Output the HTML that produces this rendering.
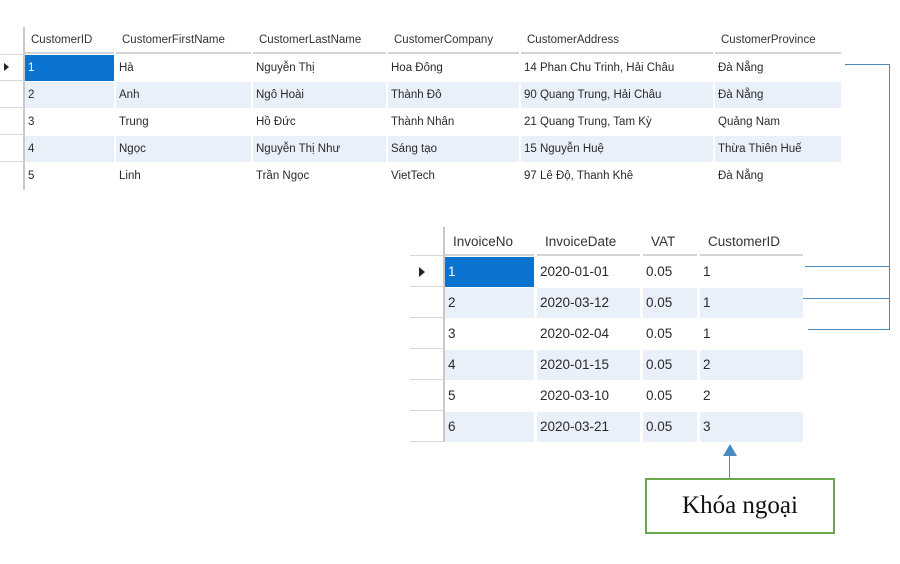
<!DOCTYPE html>
<html><head><meta charset="utf-8"><style>
body{margin:0;width:900px;height:564px;background:#fff;position:relative;overflow:hidden;font-family:"Liberation Sans","DejaVu Sans",sans-serif;color:#2a2a2a}
.g{position:absolute;display:grid;column-gap:2px;row-gap:1px}
.g div{white-space:nowrap;overflow:hidden;padding-left:3px;box-sizing:border-box}
.h{background:#fff;color:#333}
.a{background:#fff}
.b{background:#e9f0fa}
.s{background:#0a74d0;color:#fff}
#t1{left:25px;top:27px;grid-template-columns:89px 135px 133px 131px 192px 126px;grid-template-rows:27px repeat(5,26px);font-size:11.5px;line-height:26px}
#t2{left:445px;top:227px;grid-template-columns:89px 103px 54px 103px;grid-template-rows:29px repeat(6,30px);font-size:13.5px;line-height:30px;column-gap:3px;row-gap:1px}
#t1 .h{border-bottom:2px solid #d4d4d4;padding-left:6px}
#t2 .h{border-bottom:2px solid #d4d4d4;padding-left:8px;line-height:29px}
.rh{position:absolute;border-right:2px solid #c8c8c8}
.rl{position:absolute;height:1px;background:#d8d8d8}
.ln{position:absolute;background:#4a8ac0}
</style></head><body>
<div class="rh" style="left:0;top:27px;width:23px;height:163px"></div>
<div class="rl" style="left:0;top:54px;width:24px"></div><div class="rl" style="left:0;top:80px;width:24px"></div><div class="rl" style="left:0;top:107px;width:24px"></div><div class="rl" style="left:0;top:134px;width:24px"></div><div class="rl" style="left:0;top:161px;width:24px"></div>
<div style="position:absolute;left:4px;top:63px;width:0;height:0;border-left:5px solid #222;border-top:4px solid transparent;border-bottom:4px solid transparent"></div>
<div class="g" id="t1">
<div class="h">CustomerID</div><div class="h">CustomerFirstName</div><div class="h">CustomerLastName</div><div class="h">CustomerCompany</div><div class="h">CustomerAddress</div><div class="h">CustomerProvince</div>
<div class="s">1</div><div class="a">Hà</div><div class="a">Nguyễn Thị</div><div class="a">Hoa Đông</div><div class="a">14 Phan Chu Trinh, Hải Châu</div><div class="a">Đà Nẵng</div>
<div class="b">2</div><div class="b">Anh</div><div class="b">Ngô Hoài</div><div class="b">Thành Đô</div><div class="b">90 Quang Trung, Hải Châu</div><div class="b">Đà Nẵng</div>
<div class="a">3</div><div class="a">Trung</div><div class="a">Hồ Đức</div><div class="a">Thành Nhân</div><div class="a">21 Quang Trung, Tam Kỳ</div><div class="a">Quảng Nam</div>
<div class="b">4</div><div class="b">Ngọc</div><div class="b">Nguyễn Thị Như</div><div class="b">Sáng tạo</div><div class="b">15 Nguyễn Huệ</div><div class="b">Thừa Thiên Huế</div>
<div class="a">5</div><div class="a">Linh</div><div class="a">Trần Ngọc</div><div class="a">VietTech</div><div class="a">97 Lê Độ, Thanh Khê</div><div class="a">Đà Nẵng</div>
</div>

<div class="rh" style="left:410px;top:227px;width:33px;height:215px"></div>
<div class="rl" style="left:410px;top:255px;width:34px"></div><div class="rl" style="left:410px;top:286px;width:34px"></div><div class="rl" style="left:410px;top:317px;width:34px"></div><div class="rl" style="left:410px;top:348px;width:34px"></div><div class="rl" style="left:410px;top:379px;width:34px"></div><div class="rl" style="left:410px;top:410px;width:34px"></div><div class="rl" style="left:410px;top:441px;width:34px"></div>
<div style="position:absolute;left:419px;top:267px;width:0;height:0;border-left:6px solid #222;border-top:5px solid transparent;border-bottom:5px solid transparent"></div>
<div class="g" id="t2">
<div class="h">InvoiceNo</div><div class="h">InvoiceDate</div><div class="h">VAT</div><div class="h">CustomerID</div>
<div class="s">1</div><div class="a">2020-01-01</div><div class="a">0.05</div><div class="a">1</div>
<div class="b">2</div><div class="b">2020-03-12</div><div class="b">0.05</div><div class="b">1</div>
<div class="a">3</div><div class="a">2020-02-04</div><div class="a">0.05</div><div class="a">1</div>
<div class="b">4</div><div class="b">2020-01-15</div><div class="b">0.05</div><div class="b">2</div>
<div class="a">5</div><div class="a">2020-03-10</div><div class="a">0.05</div><div class="a">2</div>
<div class="b">6</div><div class="b">2020-03-21</div><div class="b">0.05</div><div class="b">3</div>
</div>

<div class="ln" style="left:845px;top:64px;width:45px;height:1px"></div>
<div class="ln" style="left:889px;top:64px;width:1px;height:266px"></div>
<div class="ln" style="left:805px;top:266px;width:85px;height:1px"></div>
<div class="ln" style="left:803px;top:298px;width:87px;height:1px"></div>
<div class="ln" style="left:808px;top:329px;width:82px;height:1px"></div>
<div class="ln" style="left:729px;top:455px;width:1px;height:24px"></div>
<div style="position:absolute;left:723px;top:444px;width:0;height:0;border-bottom:12px solid #4a8ac0;border-left:7px solid transparent;border-right:7px solid transparent"></div>
<div style="position:absolute;left:645px;top:478px;width:190px;height:56px;box-sizing:border-box;border:2px solid #6aa84f;font-family:'Liberation Serif',serif;font-size:25px;text-align:center;line-height:52px;color:#111">Khóa ngoại</div>
</body></html>
